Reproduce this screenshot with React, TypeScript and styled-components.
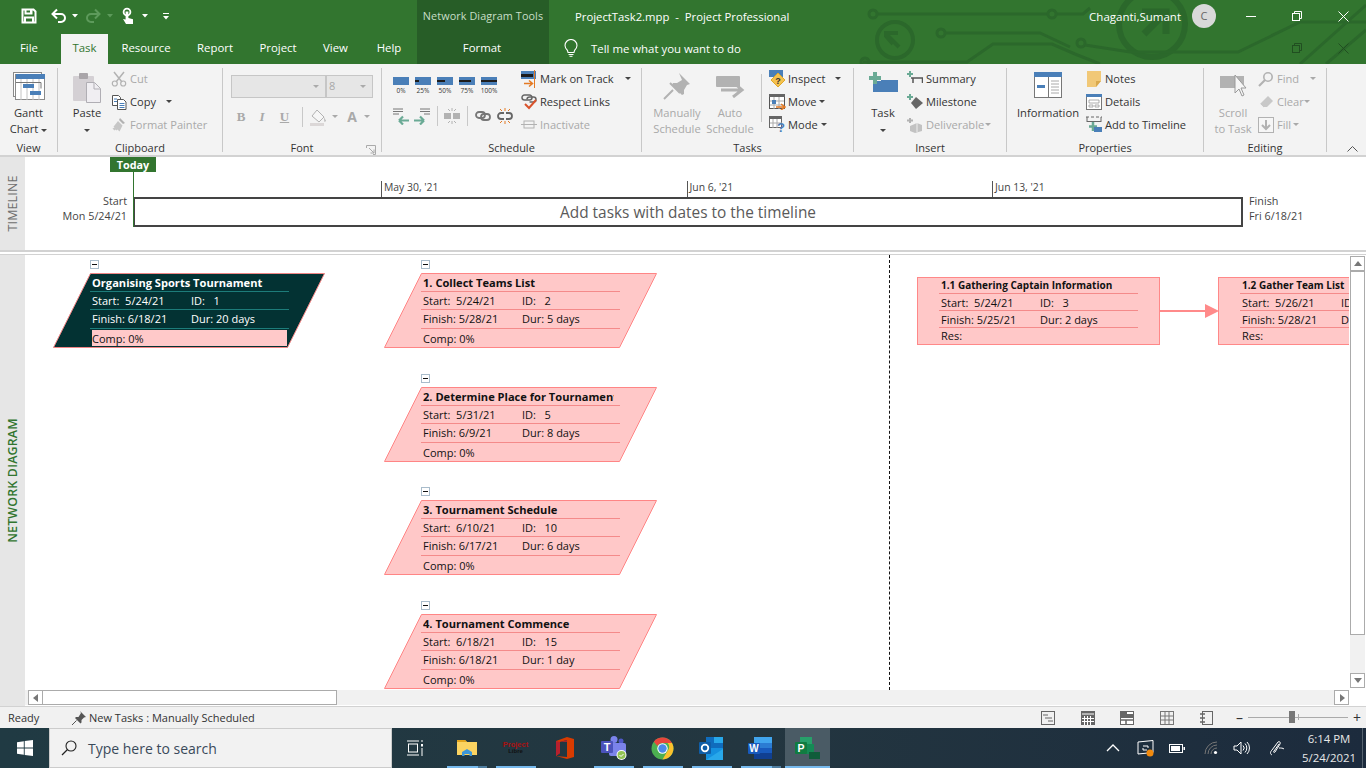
import React from 'react';
import styled, { createGlobalStyle } from 'styled-components';

const UI = `"Open Sans", "Noto Sans", sans-serif`;
const Global = createGlobalStyle`
  html, body { margin: 0; padding: 0; overflow: hidden; background: #fff; }
  * { box-sizing: border-box; }
  body { font-family: ${UI}; font-size: 11.5px; color: #333; }
`;
const Page = styled.div`width:1366px;height:768px;display:flex;flex-direction:column;overflow:hidden;`;

/* ---------- title bar ---------- */
const TitleBar = styled.header`position:relative;height:64px;flex:none;background:#32752f;color:#fff;`;
const Circuit = styled.svg`position:absolute;left:0;top:0;pointer-events:none;`;
const BarRow = styled.div`position:relative;height:32px;display:flex;align-items:center;`;
const Qat = styled.div`width:417px;height:32px;position:relative;flex:none;display:flex;align-items:center;padding-left:21px;`;
const ToolsLabel = styled.div`width:132px;height:32px;flex:none;background:#275d27;color:#c9dfc8;text-align:center;line-height:32px;font-size:10.8px;letter-spacing:.1px;`;
const DocTitle = styled.div`flex:1;padding-left:26px;font-size:11.3px;white-space:pre;`;
const UserName = styled.div`font-size:11.5px;margin-right:11px;`;
const Avatar = styled.div`width:24px;height:24px;border-radius:50%;background:#d9d9d9;color:#666;font-size:11px;text-align:center;line-height:24px;margin-right:12px;`;
const WinBtns = styled.div<{ $end?: boolean }>`display:flex;flex:none;align-items:center;${p => p.$end ? 'margin-left:auto;' : ''}`;
const WinBtn = styled.div`width:46px;display:flex;justify-content:center;`;
const Tab = styled.div<{ $w: number; $active?: boolean; $dark?: boolean; $pr?: number }>`
  width:${p => p.$w}px;padding-right:${p => p.$pr || 0}px;height:${p => p.$active ? 30 : 32}px;margin-top:${p => p.$active ? 2 : 0}px;line-height:${p => p.$active ? 28 : 32}px;text-align:center;flex:none;font-size:11.4px;
  background:${p => p.$active ? '#f3f3f3' : p.$dark ? '#275d27' : 'transparent'};
  color:${p => p.$active ? '#32752f' : '#fff'};
`;
const TellMe = styled.div`display:flex;align-items:center;gap:13px;padding-left:15px;font-size:11.4px;`;

/* ---------- ribbon ---------- */
const Ribbon = styled.section`height:93px;flex:none;background:#f3f3f3;border-bottom:2px solid #d2d2d2;display:flex;padding-top:4px;position:relative;`;
const Group = styled.div<{ $w: number }>`width:${p => p.$w}px;height:84px;flex:none;border-right:1px solid #c8c8c8;display:flex;flex-direction:column;`;
const GroupBody = styled.div`height:71px;flex:none;display:flex;`;
const GroupLabel = styled.div`height:13px;text-align:center;font-size:11px;color:#333;line-height:17px;position:relative;`;
const Large = styled.div<{ $w: number; $off?: boolean; $ml?: number }>`
  width:${p => p.$w}px;margin-left:${p => p.$ml || 0}px;flex:none;display:flex;flex-direction:column;align-items:center;
  color:${p => p.$off ? '#a9a9a9' : '#333'};font-size:11.2px;line-height:16px;text-align:center;
`;
const LargeIcon = styled.div`height:36px;margin-top:1px;padding-top:3px;flex:none;display:flex;align-items:flex-start;justify-content:center;`;
const Smalls = styled.div<{ $ml?: number }>`margin-left:${p => p.$ml || 0}px;display:flex;flex-direction:column;margin-top:-1px;flex:none;`;
const Small = styled.div<{ $off?: boolean }>`height:23px;display:flex;align-items:center;font-size:11.1px;white-space:nowrap;color:${p => p.$off ? '#a9a9a9' : '#333'};`;
const SmallIco = styled.span`width:16px;height:16px;margin-right:3px;display:flex;flex:none;align-items:center;justify-content:flex-start;`;
const Caret = styled.span<{ $off?: boolean; $ml?: number }>`display:inline-block;margin-left:${p => p.$ml ?? 3}px;border-left:3px solid transparent;border-right:3px solid transparent;border-top:3px solid ${p => p.$off ? '#a9a9a9' : '#444'};vertical-align:middle;`;
const VSep = styled.div<{ $m: string; $h: number }>`width:1px;height:${p => p.$h}px;background:#c8c8c8;margin:${p => p.$m};flex:none;`;
const Spacer = styled.span<{ $w: number }>`width:${p => p.$w}px;flex:none;`;
const FontCol = styled.div`margin-left:8px;display:flex;flex-direction:column;`;
const Combos = styled.div`display:flex;margin-top:7px;height:23px;`;
const Combo = styled.div<{ $w: number }>`width:${p => p.$w}px;height:23px;background:#e6e6e6;border:1px solid #c6c6c6;position:relative;color:#a9a9a9;font-size:11px;line-height:20px;padding-left:2px;&::after{content:'';position:absolute;right:6px;top:9px;border-left:3px solid transparent;border-right:3px solid transparent;border-top:3px solid #aaa;}`;
const FontRow = styled.div`display:flex;align-items:center;height:23px;margin-top:7px;color:#a9a9a9;`;
const FontBtn = styled.span<{ $w: number; $i?: boolean; $u?: boolean; $ml?: number; $sans?: boolean }>`width:${p => p.$w}px;margin-left:${p => p.$ml || 0}px;text-align:center;font-family:${p => p.$sans ? UI : '"Liberation Serif",serif'};font-weight:700;font-size:${p => p.$sans ? 14 : 13}px;font-style:${p => p.$i ? 'italic' : 'normal'};text-decoration:${p => p.$u ? 'underline' : 'none'};`;
const Launcher = styled.svg`position:absolute;right:5px;top:6px;`;
const PctWrap = styled.div`margin-left:11px;display:flex;flex-direction:column;width:120px;flex:none;`;
const PctRow = styled.div`display:flex;margin-top:9px;height:20px;gap:6px;`;
const Pct = styled.div`width:16px;display:flex;flex-direction:column;align-items:center;font-size:6.5px;line-height:8px;color:#333;`;
const PctBar = styled.div<{ $v: number }>`width:16px;height:8px;background:#4a7fb8;position:relative;margin-bottom:2px;&::after{content:'';position:absolute;left:0;top:3px;height:2px;width:${p => p.$v}%;background:#1d1d1d;}`;
const IconRow = styled.div`display:flex;align-items:center;margin-top:9px;height:20px;`;
const Collapse = styled.svg`position:absolute;right:8px;bottom:3px;`;

/* ---------- timeline ---------- */
const TimelinePane = styled.section`height:95px;flex:none;display:flex;border-bottom:2px solid #d2d2d2;`;
const SideLabel = styled.div<{ $green?: boolean }>`width:25px;flex:none;background:#e6e6e6;display:flex;align-items:center;justify-content:center;
  color:${p => p.$green ? '#32752f' : '#6e6e6e'};font-size:12.4px;font-weight:${p => p.$green ? 600 : 400};white-space:nowrap;letter-spacing:.2px;`;
const Vert = styled.span`display:block;transform:rotate(-90deg);`;
const TimelineCanvas = styled.div`flex:1;position:relative;`;
const TodayTag = styled.div`margin-left:85px;width:46px;height:15px;background:#32752f;color:#fff;font-weight:700;font-size:10.8px;line-height:16px;text-align:center;`;
const TodayLine = styled.div`position:absolute;left:108px;top:15px;width:1px;height:55px;background:#32752f;`;
const TlBody = styled.div`display:flex;margin-top:9px;align-items:flex-end;`;
const TlSide = styled.div<{ $left?: boolean }>`width:${p => p.$left ? 102 : 100}px;flex:none;margin:${p => p.$left ? '0 7px 0 0' : '0 0 0 6px'};text-align:${p => p.$left ? 'right' : 'left'};font-size:10.8px;line-height:15px;color:#444;padding-bottom:4px;`;
const TlTrack = styled.div`width:1109px;flex:none;`;
const Ticks = styled.div`display:flex;height:16px;padding-left:247px;`;
const Tick = styled.div`width:305.5px;flex:none;border-left:1px solid #555;padding-left:2px;font-size:10.4px;color:#444;line-height:13px;`;
const TlBar = styled.div`height:30px;border:2px solid #444;margin-left:-1px;text-align:center;font-size:15.4px;color:#5a5a5a;line-height:28px;`;

/* ---------- network diagram ---------- */
const DiagramPane = styled.section`flex:1;display:flex;min-height:0;border-top:1px solid #d2d2d2;margin-top:2px;`;
const DiagramMain = styled.div`flex:1;display:flex;flex-direction:column;`;
const DiagramTop = styled.div`height:435px;display:flex;`;
const Canvas = styled.div`flex:1;position:relative;overflow:hidden;background:#fff;`;
const VScroll = styled.div`width:17px;flex:none;display:flex;flex-direction:column;padding:1px 1px 2px 0;align-items:flex-end;`;
const SbBtn = styled.div`width:15px;height:15px;border:1px solid #ababab;background:#fff;display:flex;align-items:center;justify-content:center;flex:none;`;
const SbThumb = styled.div<{ $len: number }>`width:15px;height:${p => p.$len}px;border:1px solid #ababab;background:#fff;flex:none;`;
const SbTrack = styled.div`flex:1;width:15px;background:#f1f1f1;`;
const HScroll = styled.div`height:15px;display:flex;background:#f1f1f1;padding-left:3px;`;
const HThumb = styled.div`width:295px;height:15px;border:1px solid #ababab;background:#fff;margin-left:-1px;`;
const HFill = styled.div`flex:1;`;
const HCorner = styled.div`width:17px;background:#fff;`;
const Dashed = styled.div`position:absolute;left:864px;top:0;bottom:0;border-left:1px dashed #111;`;
const Minus = styled.div`position:absolute;width:9px;height:9px;border:1px solid #a9bccb;background:#fff;&::after{content:'';position:absolute;left:1px;top:3px;width:5px;height:1px;background:#111;}`;
const Node = styled.div<{ $dark?: boolean; $w: number }>`position:absolute;width:${p => p.$w}px;height:75px;color:${p => p.$dark ? '#fff' : '#111'};`;
const NodeShape = styled.svg`position:absolute;left:0;top:0;`;
const NodeRows = styled.div<{ $ml: number }>`position:absolute;left:${p => p.$ml}px;top:0;width:199px;`;
const NRow = styled.div<{ $h: number; $line: string; $pb?: number }>`height:${p => p.$h}px;padding:0 0 ${p => p.$pb ?? 0}px 2px;border-bottom:1px solid ${p => p.$line};display:flex;overflow:hidden;align-items:center;font-size:11px;white-space:pre;`;
const NTitle = styled.div`height:16px;width:191px;margin:1px 0 0 2px;font-weight:700;font-size:11.1px;line-height:18px;overflow:hidden;white-space:pre;`;
const NTitleRow = styled.div<{ $line: string }>`height:18px;border-bottom:1px solid ${p => p.$line};`;
const RTitleRow = styled.div<{ $line: string }>`height:16px;padding-left:2px;border-bottom:1px solid ${p => p.$line};font-weight:700;font-size:10px;line-height:14px;white-space:pre;overflow:hidden;`;
const NRowEnd = styled.div<{ $hl?: boolean; $h: number }>`height:${p => p.$h}px;padding-left:${p => p.$hl ? 0 : 2}px;margin-left:${p => p.$hl ? 2 : 0}px;display:flex;align-items:center;font-size:11px;width:${p => p.$hl ? 195 : 199}px;background:${p => p.$hl ? '#ffc9c9' : 'none'};color:${p => p.$hl ? '#111' : 'inherit'};margin-top:${p => p.$hl ? 1 : 0}px;`;
const NCol = styled.span`width:99px;flex:none;`;
const Rect = styled.div`position:absolute;height:68px;background:#ffc8c8;border:1px solid #f88;color:#111;`;
const RectRows = styled.div`margin-left:21px;width:199px;`;
const Arrow = styled.svg`position:absolute;`;

/* ---------- status bar ---------- */
const Status = styled.footer`height:22px;flex:none;background:#f1f1f1;border-top:1px solid #d2d2d2;display:flex;align-items:center;padding-left:8px;font-size:11px;color:#333;`;
const Ready = styled.span`width:64px;`;
const StatusPin = styled.span`display:flex;align-items:center;gap:3px;flex:1;`;
const ViewIcons = styled.div`display:flex;gap:25.500px;margin-right:23px;`;
const ZoomBox = styled.div`display:flex;align-items:center;width:128px;margin-right:2px;color:#333;font-size:14px;`;
const ZoomTrack = styled.div`width:100px;height:1px;background:#aaa;margin:0 5px 0 5px;position:relative;`;
const ZoomThumb = styled.div`position:absolute;left:41px;top:-6px;width:6px;height:12px;background:#777;`;
const ZoomMark = styled.div`position:absolute;left:50px;top:-3px;width:1px;height:6px;background:#aaa;`;

/* ---------- taskbar ---------- */
const Taskbar = styled.footer`height:40px;flex:none;background:linear-gradient(90deg,#203a43 0%,#233640 55%,#1c2b3d 100%);display:flex;color:#fff;`;
const StartBtn = styled.div`width:49px;display:flex;align-items:center;justify-content:center;flex:none;`;
const Search = styled.div`width:343px;background:#f2f2f2;border:1px solid #ccc;display:flex;align-items:center;gap:11px;padding-left:11px;color:#3a4a5a;font-size:14px;flex:none;`;
const TaskView = styled.div`width:50px;padding-right:4px;display:flex;align-items:center;justify-content:center;flex:none;`;
const Tasks = styled.div`display:flex;flex:1;`;
const TaskApp = styled.div<{ $w: number; $bar?: boolean; $active?: boolean; $multi?: boolean }>`
  width:${p => p.$w}px;flex:none;height:40px;display:flex;align-items:center;justify-content:center;position:relative;
  background:${p => p.$active ? '#4a5b65' : 'transparent'};
  &::after{content:'';position:absolute;left:${p => p.$active ? 0 : 5}px;right:${p => p.$active ? 0 : 4}px;bottom:0;height:2px;
    background:${p => !p.$bar ? 'transparent' : p.$multi ? 'linear-gradient(90deg,#76b9ed 0 31px,#4e7d9f 31px)' : '#76b9ed'};}
`;
const LibreIcon = styled.div`font-family:"Liberation Sans",sans-serif;font-weight:700;font-size:7.5px;line-height:7px;color:#a11;text-align:center;`;
const LibreSub = styled.div`color:#111;font-size:6px;`;
const Tray = styled.div`display:flex;align-items:center;flex:none;`;
const TrayIco = styled.div<{ $w: number }>`width:${p => p.$w}px;display:flex;justify-content:center;align-items:center;`;
const Clock = styled.div`width:66px;text-align:center;font-size:11.4px;line-height:19px;color:#e8e8e8;white-space:nowrap;`;
const ShowDesk = styled.div`width:4px;height:40px;border-left:1px solid #56636f;`;

/* ---------- icons ---------- */
const B = '#4a7fb8', G = '#6aaa95', D = '#b2b2b2', O = '#e47a24';
const S = ({ w = 16, h = 16, children }: { w?: number; h?: number; children: React.ReactNode }) => (
  <svg width={w} height={h} viewBox={`0 0 ${w} ${h}`} fill="none" style={{ display: 'block', flex: 'none' }}>{children}</svg>
);
const SaveI = () => <S><path d="M1.500 1.500h11l2 2v11h-13z M4.500 1.500v4h6v-4 M4 14.500v-5h8v5" stroke="#fff" strokeWidth="2" fill="none" /><rect x="9" y="2" width="1.500" height="3" fill="#fff" /></S>;
const UndoI = ({ c = '#fff' }: { c?: string }) => <S w={15} h={16}><path d="M2 6h8a3.500 3.500 0 0 1 0 8H7" stroke={c} strokeWidth="2" /><path d="M6 1.500L1.500 6 6 10.500" stroke={c} strokeWidth="2" /></S>;
const Mirror = styled.span`transform:scaleX(-1);display:block;`;
const TouchI = () => <S w={14} h={18}><circle cx="6" cy="5" r="3.400" stroke="#fff" strokeWidth="1.800" /><path d="M4.600 4.500h2.800v6.500l4.600 1.200v4.800H5L2 12l2.600.5z" fill="#fff" /></S>;
const WCaret = ({ c = '#fff' }: { c?: string }) => <S w={6} h={4}><path d="M0 0h6L3 3.500z" fill={c} /></S>;
const Custom = () => <S w={6} h={7}><rect width="6" height="1" fill="#fff" /><path d="M0 3h6L3 6.500z" fill="#fff" /></S>;
const Bulb = () => <S w={14} h={18}><path d="M3.500 11.500C2 10 1 8.500 1 6.500a6 6 0 0 1 12 0c0 2-1 3.500-2.500 5l-.5 2H4z" stroke="#fff" strokeWidth="1.100" /><path d="M4.500 15.500h5M5.500 17.300h3" stroke="#fff" /></S>;
const GanttI = () => <S w={32} h={28}><rect x=".5" y=".5" width="28" height="24" stroke="#8a8a8a" fill="#fff" /><rect x="2.500" y="2.500" width="29" height="25" fill="#fff" stroke="#8a8a8a" /><rect x="3" y="2" width="29" height="5" fill={B} /><path d="M8 7v21M14 7v21M20 7v21M26 7v21" stroke="#c4c4c4" /><path d="M3 10.500h25v6" stroke="#777" /><rect x="10" y="12" width="11" height="4" fill={B} /><rect x="17" y="19" width="11" height="4" fill={B} /></S>;
const PasteI = () => <S w={30} h={32}><rect x="1" y="4" width="21" height="25" rx="1" fill="#d4d0d4" /><rect x="7" y="1" width="9" height="6" rx="1" fill="#a9a5a9" /><path d="M14.500 10.500h8l6 6v14h-14z" fill="#f0eef2" stroke="#b0aeb4" /><path d="M22 11v6h6" stroke="#b0aeb4" /></S>;
const CutI = () => <S><path d="M3 1l8 10M13 1L5 11" stroke={D} strokeWidth="1.500" /><circle cx="3.800" cy="12.500" r="2.500" stroke={D} strokeWidth="1.200" /><circle cx="12.200" cy="12.500" r="2.500" stroke={D} strokeWidth="1.200" /></S>;
const CopyI = () => <S><path d="M1.500 1.500h6l2 2v8h-8z" stroke="#555" fill="#fff" /><path d="M6.500 5.500h6l2.500 2.500v7.500h-8.500z" stroke="#555" fill="#fff" /><path d="M3 5h3M3 7.500h3M8.500 9.500h5M8.500 11.500h5M8.500 13.500h5" stroke={B} /></S>;
const BrushI = () => <S><path d="M9 1l5 5-2 1-4-4z" fill={D} /><path d="M7 4l4.500 4.500-3 6-2-2-1 1-1-1-1 1-2-2 2-1-1-1 1-1z" fill="#c6c6c6" /></S>;
const FillI = () => <S w={18} h={18}><path d="M8 2l7 7-5 5-7-6z" stroke={D} fill="#f6f6f6" /><path d="M15 9l2 4-1.500 1z" fill={D} /><rect x="1" y="15" width="14" height="3" fill="#dbd7d7" /></S>;
const MarkI = () => <S w={17} h={18}><rect x="0" y="1" width="15" height="8" fill={B} /><rect x="0" y="4" width="12" height="3" fill="#1b1b1b" /><path d="M13.500 0v18" stroke={O} /><path d="M3 13.500h8M8 10.500l3.500 3-3.500 3" stroke={O} strokeWidth="1.500" /></S>;
const RespectI = () => <S w={17} h={18}><path d="M1 4.500a2.500 2.500 0 0 1 2.500-2.500h5a2.500 2.500 0 0 1 0 5h-5a2.500 2.500 0 0 1-2.500-2.500z" stroke="#666" strokeWidth="1.500" /><path d="M6 6.500a2.500 2.500 0 0 1 2.500-2.500h4a2.500 2.500 0 0 1 0 5h-4" stroke="#666" strokeWidth="1.500" /><path d="M4 11l4 4 7-8" stroke="#d9532c" strokeWidth="2" /></S>;
const InactI = () => <S w={16} h={10}><rect x="3" y="1" width="10" height="7" stroke={D} /><path d="M0 4.500h16" stroke={D} /></S>;
const Indent = ({ flip }: { flip?: boolean }) => <S w={16} h={17}><g transform={flip ? 'translate(16 0) scale(-1 1)' : undefined}><path d="M0 1h10M0 3.500h10M0 6h6" stroke="#777" /><path d="M6 12.500h10M6 12.500l4-4M6 12.500l4 4" stroke={G} strokeWidth="2.200" /></g></S>;
const SplitI = () => <S w={16} h={16}><rect x="0" y="5" width="7" height="6" fill={D} /><rect x="9" y="5" width="7" height="6" fill={D} /><path d="M8 0v3M8 13v3M4 1l2 2M12 1l-2 2M4 15l2-2M12 15l-2-2" stroke={D} /></S>;
const LinkI = () => <S w={16} h={10}><rect x="1" y="1" width="9" height="6" rx="3" stroke="#777" strokeWidth="1.800" /><rect x="6" y="3" width="9" height="6" rx="3" stroke="#777" strokeWidth="1.800" /></S>;
const UnlinkI = () => <S w={16} h={16}><path d="M7 5H4a3 3 0 0 0 0 6h3M9 5h3a3 3 0 0 1 0 6H9" stroke="#666" strokeWidth="1.800" /><path d="M8 0v3M8 13v3M3 1l2 2M13 1l-2 2M3 15l2-2M13 15l-2-2" stroke={O} /></S>;
const PinL = () => <S w={28} h={28}><path d="M16 1l11 11-3 1-3 5 0 4-2 1-10-10 1-2 4 0 5-3z" fill={D} /><path d="M10 18L1 27" stroke={D} strokeWidth="2" /><path d="M7 11l10 10" stroke={D} strokeWidth="2" /></S>;
const AutoI = () => <S w={29} h={26}><rect x="0" y="4" width="24" height="11" rx="1" fill={D} /><path d="M5 18h20M17 10l9 8-9 7" stroke={D} strokeWidth="3" /></S>;
const InspectI = () => <S w={18} h={18}><rect x="0" y="0" width="14" height="7" fill={B} /><path d="M9 3l7 7-7 7-7-7z" fill="#f5c14e" stroke="#e0a92a" /><text x="9" y="13.500" fontSize="9" fontWeight="700" textAnchor="middle" fill="#333" fontFamily="Liberation Sans">?</text></S>;
const MoveI = () => <S w={17} h={16}><rect x=".5" y=".5" width="15" height="14" stroke="#555" fill="#fff" /><rect x="0" y="0" width="16" height="3" fill="#666" /><path d="M5 3v12M10 3v12M1 7h14M1 11h14" stroke="#aaa" /><rect x="3" y="6" width="4" height="4" fill={B} /><path d="M7 13h8M12 10l4 3-4 3" stroke={O} strokeWidth="1.500" /></S>;
const ModeI = () => <S w={17} h={18}><rect x=".5" y=".5" width="12" height="11" stroke="#666" fill="#fff" /><rect x="0" y="0" width="13" height="3" fill="#666" /><path d="M4 3v9M8 3v9M1 7h12" stroke="#aaa" /><text x="12" y="16" fontSize="13" fontWeight="700" textAnchor="middle" fill={B} fontFamily="Liberation Sans">?</text></S>;
const TaskI = () => <S w={29} h={20}><path d="M4 9h8v-1h17v12H4z" fill={B} /><path d="M0 4h4V0h4v4h4v4H8v4H4V8H0z" fill={G} /></S>;
const SummaryI = () => <S><path d="M3 0v6M0 3h6" stroke={G} strokeWidth="2" /><path d="M4 7h12M15.500 7v5M6 7v5" stroke="#555" strokeWidth="1.500" /></S>;
const MileI = () => <S><path d="M3 0v6M0 3h6" stroke={G} strokeWidth="2" /><path d="M9 3l7 6-7 6-5-6z" fill="#666" /></S>;
const DelivI = () => <S><path d="M3 1v5M0 3.500h6" stroke={D} strokeWidth="2" /><path d="M3 9l7-3 5 2v6l-7 2-5-2z" fill="#c2c2c2" /><path d="M10 6v9" stroke="#eee" /></S>;
const InfoI = () => <S w={29} h={27}><rect x=".5" y=".5" width="27" height="25" fill="#fff" stroke="#777" /><rect x="0" y="0" width="28" height="5" fill={B} /><path d="M14.500 5v20" stroke="#777" /><rect x="3" y="13" width="8" height="3" fill={B} /><path d="M17 9h8M17 12h8M17 15h8M17 18h8M17 21h8" stroke="#aaa" /></S>;
const NotesI = () => <S><path d="M1 0h14v10l-5 6H1z" fill="#f1c877" /><path d="M10 16v-6h5z" fill="#d9a94e" /></S>;
const DetailsI = () => <S><rect x=".5" y=".5" width="15" height="15" stroke="#777" fill="#fff" /><rect x="0" y="0" width="16" height="3" fill={B} /><path d="M3 6h10v3H3zM3 11h4v2H3zM9 11h4v2H9z" stroke="#999" strokeWidth=".8" /></S>;
const AddTlI = () => <S w={17} h={17}><path d="M0 1h16" stroke="#666" strokeDasharray="3 2" /><path d="M1 1v5M15 1v5M1 5.500h14" stroke="#666" /><path d="M7 6v9M3 10.500h8" stroke={G} strokeWidth="2.500" /><rect x="8" y="11" width="8" height="5" fill={B} /></S>;
const ScrollI = () => <S w={28} h={27}><rect x="1" y="4" width="24" height="12" fill={D} /><path d="M16 3v18l4-4 3 7 2-1-3-7h5z" fill="#f6f6f6" stroke="#9a9a9a" /></S>;
const FindI = () => <S><circle cx="10" cy="6" r="4.200" stroke={D} strokeWidth="1.600" /><path d="M7 9l-6 6" stroke={D} strokeWidth="2.200" /></S>;
const ClearI = () => <S><path d="M10 2l5 5-6 6H5l-3-3z" fill="#c8c8c8" /><path d="M2 10l4 4" stroke="#eee" /></S>;
const FillDown = () => <S><rect x=".5" y=".5" width="15" height="15" stroke={D} fill="#f6f6f6" /><path d="M8 3v9M4 8l4 4 4-4" stroke={D} strokeWidth="2" /></S>;
const WinI = () => <S w={16} h={16}><path d="M0 2.200l6.800-1v6.300H0zM7.700 1.100L16 0v7.500H7.700zM0 8.400h6.800v6.400L0 13.800zM7.700 8.400H16V16l-8.300-1.100z" fill="#fff" /></S>;
const SearchI = () => <S><circle cx="10" cy="6" r="5" stroke="#222" strokeWidth="1.100" /><path d="M6.500 9.500L1 15" stroke="#222" strokeWidth="1.300" /></S>;
const TaskViewI = () => <S w={16} h={16}><path d="M0 1h12M0 15h12" stroke="#fff" /><rect x="1.500" y="4" width="9" height="8" stroke="#fff" /><rect x="14" y="4" width="2" height="2.500" fill="#fff" /><path d="M15 8v8M15 0v2" stroke="#fff" /></S>;
const ExplorerI = () => <S w={22} h={18}><path d="M1 1h8l2 2h10v13H1z" fill="#fbd361" /><path d="M1 1h8l2 2H1z" fill="#e3a51e" /><path d="M6 17v-4l5-3 5 3v4h-2.500v-2h-5v2z" fill="#3d96d8" /></S>;
const OfficeI = () => <S w={18} h={22}><path d="M11 0l7 2v18l-7 2-11-3 11 1V3L4 5v11l-4 3V4z" fill="#d83b01" /><path d="M0 4l4 1v11l-4 3z" fill="#b7202e" /><path d="M4 5l7-2v2z" fill="#a4262c" /></S>;
const TeamsI = () => <S w={26} h={24}><circle cx="13" cy="3.500" r="3.500" fill="#7b83eb" /><circle cx="20" cy="5" r="2.500" fill="#5059c9" /><rect x="8" y="7" width="17" height="13" rx="2" fill="#7b83eb" /><rect x="0" y="5" width="12" height="12" rx="1" fill="#4b53bc" /><text x="6" y="14.500" fontSize="11" fontWeight="700" textAnchor="middle" fill="#fff" fontFamily="Liberation Sans">T</text><circle cx="20.500" cy="19" r="5" fill="#fff" /><circle cx="20.500" cy="19" r="4" fill="#92c353" /><path d="M18.500 19l1.500 1.500 2.500-2.500" stroke="#fff" /></S>;
const ChromeI = () => <S w={23} h={23}><circle cx="11.500" cy="11.500" r="11" fill="#4caf50" /><path d="M11.500.5a11 11 0 0 1 9.500 5.500H11.500a5.500 5.500 0 0 0-5 3L2.800 4.700A11 11 0 0 1 11.500.5z" fill="#e8453c" /><path d="M21 6a11 11 0 0 1-9.500 16.500l5-8.500a5.500 5.500 0 0 0 0-8z" fill="#fbc02d" /><circle cx="11.500" cy="11.500" r="5.200" fill="#fff" /><circle cx="11.500" cy="11.500" r="4.200" fill="#4a89e8" /></S>;
const OutlookI = () => <S w={25} h={23}><rect x="7" y="0" width="17" height="12" fill="#0f6cbd" /><rect x="15" y="0" width="9" height="6" fill="#28a8ea" /><path d="M7 11h17v12H7z" fill="#1490df" /><path d="M7 23l17-11v11z" fill="#28a8ea" /><rect x="0" y="5" width="12" height="12" rx="1" fill="#0f5ea8" /><circle cx="6" cy="11" r="3.300" stroke="#fff" strokeWidth="1.800" /></S>;
const WordI = () => <S w={25} h={22}><rect x="6" y="0" width="18" height="22" rx="1" fill="#2b7cd3" /><rect x="6" y="0" width="18" height="6" fill="#41a5ee" /><rect x="6" y="11" width="18" height="5" fill="#185abd" /><rect x="6" y="16" width="18" height="6" fill="#103f91" /><rect x="0" y="6" width="12" height="11" rx="1" fill="#185abd" /><text x="6" y="15" fontSize="10" fontWeight="700" textAnchor="middle" fill="#fff" fontFamily="Liberation Sans">W</text></S>;
const ProjectI = () => <S w={25} h={22}><rect x="5" y="0" width="12" height="12" fill="#27a06a" /><rect x="9" y="7" width="10" height="10" fill="#148a55" /><rect x="14" y="15" width="11" height="7" fill="#0f5c3a" /><rect x="0" y="5" width="12" height="12" rx="1" fill="#107c41" /><text x="6" y="15" fontSize="10.500" fontWeight="700" textAnchor="middle" fill="#fff" fontFamily="Liberation Sans">P</text></S>;
const Chev = () => <S w={14} h={8}><path d="M1 7l6-6 6 6" stroke="#fff" strokeWidth="1.300" /></S>;
const NetI = () => <S w={18} h={18}><path d="M1 3l15-1.500v12l-15 1.500z" stroke="#fff" /><path d="M6 7h5v2M10 11H6V9" stroke="#fff" /><circle cx="13" cy="14" r="3.500" fill="#f28a0d" /></S>;
const BattI = () => <S w={16} h={9}><rect x=".5" y=".5" width="13" height="8" stroke="#fff" /><rect x="2" y="2" width="9" height="5" fill="#fff" /><rect x="14.500" y="3" width="1.500" height="3" fill="#fff" /></S>;
const WifiI = () => <S w={14} h={14}><path d="M1 13a12 12 0 0 1 12-12M4 13a9 9 0 0 1 9-9M7 13a6 6 0 0 1 6-6" stroke="#777" /><circle cx="11.500" cy="11.500" r="1.600" fill="#fff" /></S>;
const SoundI = () => <S w={17} h={14}><path d="M1 5h3l4-4v12L4 9H1z" stroke="#fff" /><path d="M10 4.500a3.500 3.500 0 0 1 0 5M12 2.500a6.500 6.500 0 0 1 0 9M14 1a8.500 8.500 0 0 1 0 12" stroke="#fff" /></S>;
const PenI = () => <S w={16} h={16}><path d="M3 15c-2-1-2-3 0-5l6-8c1-1 3 0 2 2L6 12c-1 1-2 0-1-1l5-7M10 8c2 0 4 0 5 1" stroke="#fff" fill="none" /></S>;
const PinS = () => <S w={14} h={14}><path d="M8 0l6 6-2 .5-2.500 2.500v2.500l-1 1-5.500-5.500 1-1h2.500L9 2z" fill="#555" /><path d="M4.500 9.500L0 14" stroke="#555" /></S>;
const V1 = () => <S w={14} h={14}><rect x=".5" y=".5" width="13" height="13" stroke="#666" /><path d="M2 4h5M4 7h7M7 10h5" stroke="#666" /></S>;
const V2 = () => <S w={14} h={14}><rect x="0" y="0" width="14" height="14" fill="#666" /><path d="M1 3h12M3.500 5v9M6.500 5v9M9.500 5v9M1 7.500h12M1 10.500h12" stroke="#fff" /></S>;
const V3 = () => <S w={14} h={14}><rect x=".5" y=".5" width="13" height="13" fill="#fff" stroke="#666" /><rect x="0" y="0" width="7" height="7" fill="#666" /><rect x="7" y="3" width="7" height="4" fill="#666" /><path d="M0 9h14M6 9v5" stroke="#666" strokeWidth="1.500" /></S>;
const V4 = () => <S w={14} h={14}><rect x=".5" y=".5" width="13" height="13" stroke="#777" /><path d="M5 0v14M9 0v14M0 5h14M0 9h14" stroke="#777" /></S>;
const V5 = () => <S w={14} h={14}><rect x="3.500" y=".5" width="10" height="13" stroke="#666" /><path d="M1 3h5M1 7h5M1 11h5" stroke="#666" strokeWidth="1.500" /></S>;

type NodeData = { t: string; start: string; id: string; fin: string; dur: string };
const col2: (NodeData & { y: number })[] = [
  { y: 19, t: '1. Collect Teams List', start: '5/24/21', id: '2', fin: '5/28/21', dur: '5 days' },
  { y: 133, t: '2. Determine Place for Tournament', start: '5/31/21', id: '5', fin: '6/9/21', dur: '8 days' },
  { y: 246, t: '3. Tournament Schedule', start: '6/10/21', id: '10', fin: '6/17/21', dur: '6 days' },
  { y: 360, t: '4. Tournament Commence', start: '6/18/21', id: '15', fin: '6/18/21', dur: '1 day' },
];

const Para = ({ w, skew, fill, stroke }: { w: number; skew: number; fill: string; stroke: string }) => (
  <NodeShape width={w} height={75} viewBox={`0 0 ${w} 75`}>
    <polygon points={`${skew + .5},.5 ${w - .5},.5 ${w - skew - .5},74.500 .5,74.500`} fill={fill} stroke={stroke} />
  </NodeShape>
);
const Rows = ({ d, line, last, hl }: { d: NodeData; line: string; last: string; hl?: boolean }) => (
  <>
    <NTitleRow $line={line}><NTitle>{d.t}</NTitle></NTitleRow>
    <NRow $h={18} $line={line}><NCol>Start:  {d.start}</NCol>ID:   {d.id}</NRow>
    <NRow $h={19} $line={line} $pb={2}><NCol>Finish: {d.fin}</NCol>Dur: {d.dur}</NRow>
    <NRowEnd $h={hl ? 16 : 18} $hl={hl}>{last}</NRowEnd>
  </>
);
const RectRowsView = ({ d }: { d: NodeData }) => (
  <RectRows>
    <RTitleRow $line="#f48a8a">{d.t}</RTitleRow>
    <NRow $h={17} $line="#f48a8a"><NCol>Start:  {d.start}</NCol>ID:   {d.id}</NRow>
    <NRow $h={17} $line="#f48a8a"><NCol>Finish: {d.fin}</NCol>Dur: {d.dur}</NRow>
    <NRowEnd $h={15}>Res:</NRowEnd>
  </RectRows>
);
const ScrollArrow = ({ d }: { d: 'u' | 'd' | 'l' | 'r' }) => {
  const p = { u: 'M4 1l4 5H0z', d: 'M4 6L0 1h8z', l: 'M1 4l5-4v8z', r: 'M7 4L2 0v8z' }[d];
  return <S w={8} h={8}><path d={p} fill="#777" /></S>;
};

export default function App() {
  return (
    <Page>
      <Global />
      <TitleBar>
        <Circuit width={1366} height={64} viewBox="0 0 1366 64" fill="none" stroke="#2b682b" strokeWidth="3">
          <path d="M877 14H1048M1056 14H1083L1090 8" />
          <circle cx="873" cy="14" r="4" /><circle cx="1052" cy="14" r="4" />
          <circle cx="895" cy="40" r="18" strokeWidth="4" />
          <path d="M893 44L886 36V33H898M886 34L899 47" strokeWidth="4" />
          <circle cx="1152" cy="24" r="33" strokeWidth="6" />
          <path d="M1142 12H1166V34M1164 14L1144 34" strokeWidth="7" />
          <circle cx="941" cy="33" r="4" /><path d="M945 33H1040L1070 47" />
          <circle cx="1081" cy="43" r="4" /><path d="M1085 45L1130 52H1238L1300 22H1366" />
          <path d="M863 62H967L993 44H1052L1075 54L1100 64" />
          <path d="M1300 64L1366 5" /><path d="M1326 64L1366 30" /><circle cx="865" cy="62" r="4" />
        </Circuit>
        <BarRow>
          <Qat>
            <SaveI />
            <Spacer $w={14} /><UndoI /><Spacer $w={6} /><WCaret />
            <Spacer $w={8} /><Mirror><UndoI c="#5d9a5b" /></Mirror><Spacer $w={6} /><WCaret c="#5d9a5b" />
            <Spacer $w={8} /><TouchI /><Spacer $w={7} /><WCaret />
            <Spacer $w={15} /><Custom />
          </Qat>
          <ToolsLabel>Network Diagram Tools</ToolsLabel>
          <DocTitle>ProjectTask2.mpp  -  Project Professional</DocTitle>
          <UserName>Chaganti,Sumant</UserName>
          <Avatar>C</Avatar>
          <WinBtns>
            <WinBtn><S w={10} h={10}><path d="M0 5.500h10" stroke="#fff" /></S></WinBtn>
            <WinBtn><S w={10} h={10}><rect x=".5" y="2.500" width="7" height="7" stroke="#fff" /><path d="M2.500 2V.5h7v7H8" stroke="#fff" /></S></WinBtn>
            <WinBtn><S w={11} h={11}><path d="M.5.5l10 10M10.500.5l-10 10" stroke="#fff" /></S></WinBtn>
          </WinBtns>
        </BarRow>
        <BarRow>
          <Tab $w={61} $pr={3}>File</Tab>
          <Tab $w={47} $active>Task</Tab>
          <Tab $w={76}>Resource</Tab>
          <Tab $w={62}>Report</Tab>
          <Tab $w={64}>Project</Tab>
          <Tab $w={51}>View</Tab>
          <Tab $w={56}>Help</Tab>
          <Tab $w={132} $dark $pr={2}>Format</Tab>
          <TellMe><Bulb />Tell me what you want to do</TellMe>
          <WinBtns $end>
            <WinBtn><S w={10} h={10}><rect x=".5" y="2.500" width="7" height="7" stroke="#214f21" /><path d="M2.500 2V.5h7v7H8" stroke="#214f21" /></S></WinBtn>
            <WinBtn><S w={11} h={11}><path d="M.5.5l10 10M10.500.5l-10 10" stroke="#214f21" /></S></WinBtn>
          </WinBtns>
        </BarRow>
      </TitleBar>

      <Ribbon>
        <Group $w={58}>
          <GroupBody>
            <Large $w={57}><LargeIcon><GanttI /></LargeIcon><div>Gantt</div><div>Chart<Caret /></div></Large>
          </GroupBody>
          <GroupLabel>View</GroupLabel>
        </Group>
        <Group $w={165}>
          <GroupBody>
            <Large $w={46} $ml={6}><LargeIcon><PasteI /></LargeIcon><div>Paste</div><div><Caret $ml={0} /></div></Large>
            <Smalls $ml={1}>
              <Small $off><SmallIco><CutI /></SmallIco>Cut</Small>
              <Small><SmallIco><CopyI /></SmallIco>Copy<Caret $ml={10} /></Small>
              <Small $off><SmallIco><BrushI /></SmallIco>Format Painter</Small>
            </Smalls>
          </GroupBody>
          <GroupLabel>Clipboard</GroupLabel>
        </Group>
        <Group $w={159}>
          <GroupBody>
            <FontCol>
              <Combos><Combo $w={95} /><Combo $w={47}>8</Combo></Combos>
              <FontRow>
                <FontBtn $w={20}>B</FontBtn><FontBtn $w={22} $i>I</FontBtn><FontBtn $w={23} $u>U</FontBtn>
                <VSep $m="0 6px 0 6px" $h={20} />
                <FillI /><Caret $off $ml={5} />
                <FontBtn $w={14} $ml={7} $sans>A</FontBtn><Caret $off $ml={5} />
              </FontRow>
            </FontCol>
          </GroupBody>
          <GroupLabel>Font<Launcher width="10" height="10" viewBox="0 0 10 10" fill="none"><path d="M.5 3V.5H9.500V9.500H7M3 3l5 5M8 4.500V8H4.500" stroke="#aaa" /></Launcher></GroupLabel>
        </Group>
        <Group $w={260}>
          <GroupBody>
            <PctWrap>
              <PctRow>
                {[[0, '0%'], [25, '25%'], [50, '50%'], [75, '75%'], [100, '100%']].map(([v, l]) => (
                  <Pct key={l as string}><PctBar $v={v as number} />{l}</Pct>
                ))}
              </PctRow>
              <IconRow>
                <Indent /><Spacer $w={5} /><Indent flip />
                <VSep $m="0 6px 0 7px" $h={20} /><SplitI /><VSep $m="0 7px" $h={20} /><LinkI /><Spacer $w={6} /><UnlinkI />
              </IconRow>
            </PctWrap>
            <Smalls $ml={8}>
              <Small><SmallIco><MarkI /></SmallIco>Mark on Track<Caret $ml={11} /></Small>
              <Small><SmallIco><RespectI /></SmallIco>Respect Links</Small>
              <Small $off><SmallIco><InactI /></SmallIco>Inactivate</Small>
            </Smalls>
          </GroupBody>
          <GroupLabel>Schedule</GroupLabel>
        </Group>
        <Group $w={212}>
          <GroupBody>
            <Large $w={54} $off $ml={8}><LargeIcon><PinL /></LargeIcon><div>Manually</div><div>Schedule</div></Large>
            <Large $w={52} $off><LargeIcon><AutoI /></LargeIcon><div>Auto</div><div>Schedule</div></Large>
            <VSep $m="6px 0 0 5px" $h={48} />
            <Smalls $ml={7}>
              <Small><SmallIco><InspectI /></SmallIco>Inspect<Caret $ml={10} /></Small>
              <Small><SmallIco><MoveI /></SmallIco>Move<Caret /></Small>
              <Small><SmallIco><ModeI /></SmallIco>Mode<Caret /></Small>
            </Smalls>
          </GroupBody>
          <GroupLabel>Tasks</GroupLabel>
        </Group>
        <Group $w={153}>
          <GroupBody>
            <Large $w={44} $ml={7}><LargeIcon><TaskI /></LargeIcon><div>Task</div><div><Caret $ml={0} /></div></Large>
            <Smalls $ml={2}>
              <Small><SmallIco><SummaryI /></SmallIco>Summary</Small>
              <Small><SmallIco><MileI /></SmallIco>Milestone</Small>
              <Small $off><SmallIco><DelivI /></SmallIco>Deliverable<Caret $off $ml={1} /></Small>
            </Smalls>
          </GroupBody>
          <GroupLabel>Insert</GroupLabel>
        </Group>
        <Group $w={197}>
          <GroupBody>
            <Large $w={70} $ml={6}><LargeIcon><InfoI /></LargeIcon><div>Information</div></Large>
            <Smalls $ml={3}>
              <Small><SmallIco><NotesI /></SmallIco>Notes</Small>
              <Small><SmallIco><DetailsI /></SmallIco>Details</Small>
              <Small><SmallIco><AddTlI /></SmallIco>Add to Timeline</Small>
            </Smalls>
          </GroupBody>
          <GroupLabel>Properties</GroupLabel>
        </Group>
        <Group $w={123}>
          <GroupBody>
            <Large $w={46} $off $ml={6}><LargeIcon><ScrollI /></LargeIcon><div>Scroll</div><div>to Task</div></Large>
            <Smalls $ml={2}>
              <Small $off><SmallIco><FindI /></SmallIco>Find<Caret $off $ml={11} /></Small>
              <Small $off><SmallIco><ClearI /></SmallIco>Clear<Caret $off $ml={0} /></Small>
              <Small $off><SmallIco><FillDown /></SmallIco>Fill<Caret $off $ml={2} /></Small>
            </Smalls>
          </GroupBody>
          <GroupLabel>Editing</GroupLabel>
        </Group>
        <Collapse width="11" height="6" viewBox="0 0 11 6" fill="none"><path d="M.5 5.500l5-5 5 5" stroke="#555" /></Collapse>
      </Ribbon>

      <TimelinePane>
        <SideLabel><Vert>TIMELINE</Vert></SideLabel>
        <TimelineCanvas>
          <TodayTag>Today</TodayTag>
          <TodayLine />
          <TlBody>
            <TlSide $left>Start<br />Mon 5/24/21</TlSide>
            <TlTrack>
              <Ticks><Tick>May 30, '21</Tick><Tick>Jun 6, '21</Tick><Tick>Jun 13, '21</Tick></Ticks>
              <TlBar>Add tasks with dates to the timeline</TlBar>
            </TlTrack>
            <TlSide>Finish<br />Fri 6/18/21</TlSide>
          </TlBody>
        </TimelineCanvas>
      </TimelinePane>

      <DiagramPane>
        <SideLabel $green><Vert>NETWORK DIAGRAM</Vert></SideLabel>
        <DiagramMain>
          <DiagramTop>
            <Canvas>
              <Dashed />
              <Minus style={{ left: 65, top: 5 }} />
              <Node $w={272} $dark style={{ left: 28, top: 18 }}>
                <Para w={272} skew={37} fill="#033233" stroke="#f08585" />
                <NodeRows $ml={37}>
                  <Rows hl d={{ t: 'Organising Sports Tournament', start: '5/24/21', id: '1', fin: '6/18/21', dur: '20 days' }} line="#1d7c7a" last="Comp: 0%" />
                </NodeRows>
              </Node>
              {col2.map(n => (
                <React.Fragment key={n.id}>
                  <Minus style={{ left: 396, top: n.y - 14 }} />
                  <Node $w={273} style={{ left: 359, top: n.y - 1 }}>
                    <Para w={273} skew={37} fill="#ffc8c8" stroke="#ff8585" />
                    <NodeRows $ml={37}><Rows d={n} line="#f48a8a" last="Comp: 0%" /></NodeRows>
                  </Node>
                </React.Fragment>
              ))}
              <Rect style={{ left: 892, top: 22, width: 243 }}>
                <RectRowsView d={{ t: '1.1 Gathering Captain Information', start: '5/24/21', id: '3', fin: '5/25/21', dur: '2 days' }} />
              </Rect>
              <Arrow width="59" height="14" viewBox="0 0 59 14" style={{ left: 1135, top: 49 }}><path d="M0 7h46" stroke="#ff8a8a" strokeWidth="2" /><path d="M45 0l14 7-14 7z" fill="#ff8a8a" /></Arrow>
              <Rect style={{ left: 1193, top: 22, width: 243 }}>
                <RectRowsView d={{ t: '1.2 Gather Team List', start: '5/26/21', id: '6', fin: '5/28/21', dur: '3 days' }} />
              </Rect>
            </Canvas>
            <VScroll>
              <SbBtn><ScrollArrow d="u" /></SbBtn>
              <SbThumb $len={364} />
              <SbTrack />
              <SbBtn><ScrollArrow d="d" /></SbBtn>
            </VScroll>
          </DiagramTop>
          <HScroll>
            <SbBtn><ScrollArrow d="l" /></SbBtn>
            <HThumb />
            <HFill />
            <SbBtn><ScrollArrow d="r" /></SbBtn>
            <HCorner />
          </HScroll>
        </DiagramMain>
      </DiagramPane>

      <Status>
        <Ready>Ready</Ready>
        <StatusPin><PinS />New Tasks : Manually Scheduled</StatusPin>
        <ViewIcons><V1 /><V2 /><V3 /><V4 /><V5 /></ViewIcons>
        <ZoomBox>–<ZoomTrack><ZoomThumb /><ZoomMark /></ZoomTrack>+</ZoomBox>
      </Status>

      <Taskbar>
        <StartBtn><WinI /></StartBtn>
        <Search><SearchI />Type here to search</Search>
        <TaskView><TaskViewI /></TaskView>
        <Tasks>
          <TaskApp $w={49} $bar $multi><ExplorerI /></TaskApp>
          <TaskApp $w={49} $bar><LibreIcon>Project<LibreSub>Libre</LibreSub></LibreIcon></TaskApp>
          <TaskApp $w={49}><OfficeI /></TaskApp>
          <TaskApp $w={49} $bar><TeamsI /></TaskApp>
          <TaskApp $w={49} $bar><ChromeI /></TaskApp>
          <TaskApp $w={49} $bar><OutlookI /></TaskApp>
          <TaskApp $w={49} $bar $multi><WordI /></TaskApp>
          <TaskApp $w={45} $bar $active><ProjectI /></TaskApp>
        </Tasks>
        <Tray>
          <TrayIco $w={46}><Chev /></TrayIco>
          <TrayIco $w={20}><NetI /></TrayIco>
          <TrayIco $w={42}><BattI /></TrayIco>
          <TrayIco $w={26}><WifiI /></TrayIco>
          <TrayIco $w={34}><SoundI /></TrayIco>
          <TrayIco $w={38}><PenI /></TrayIco>
          <Clock>6:14 PM<br />5/24/2021</Clock>
          <ShowDesk />
        </Tray>
      </Taskbar>
    </Page>
  );
}
